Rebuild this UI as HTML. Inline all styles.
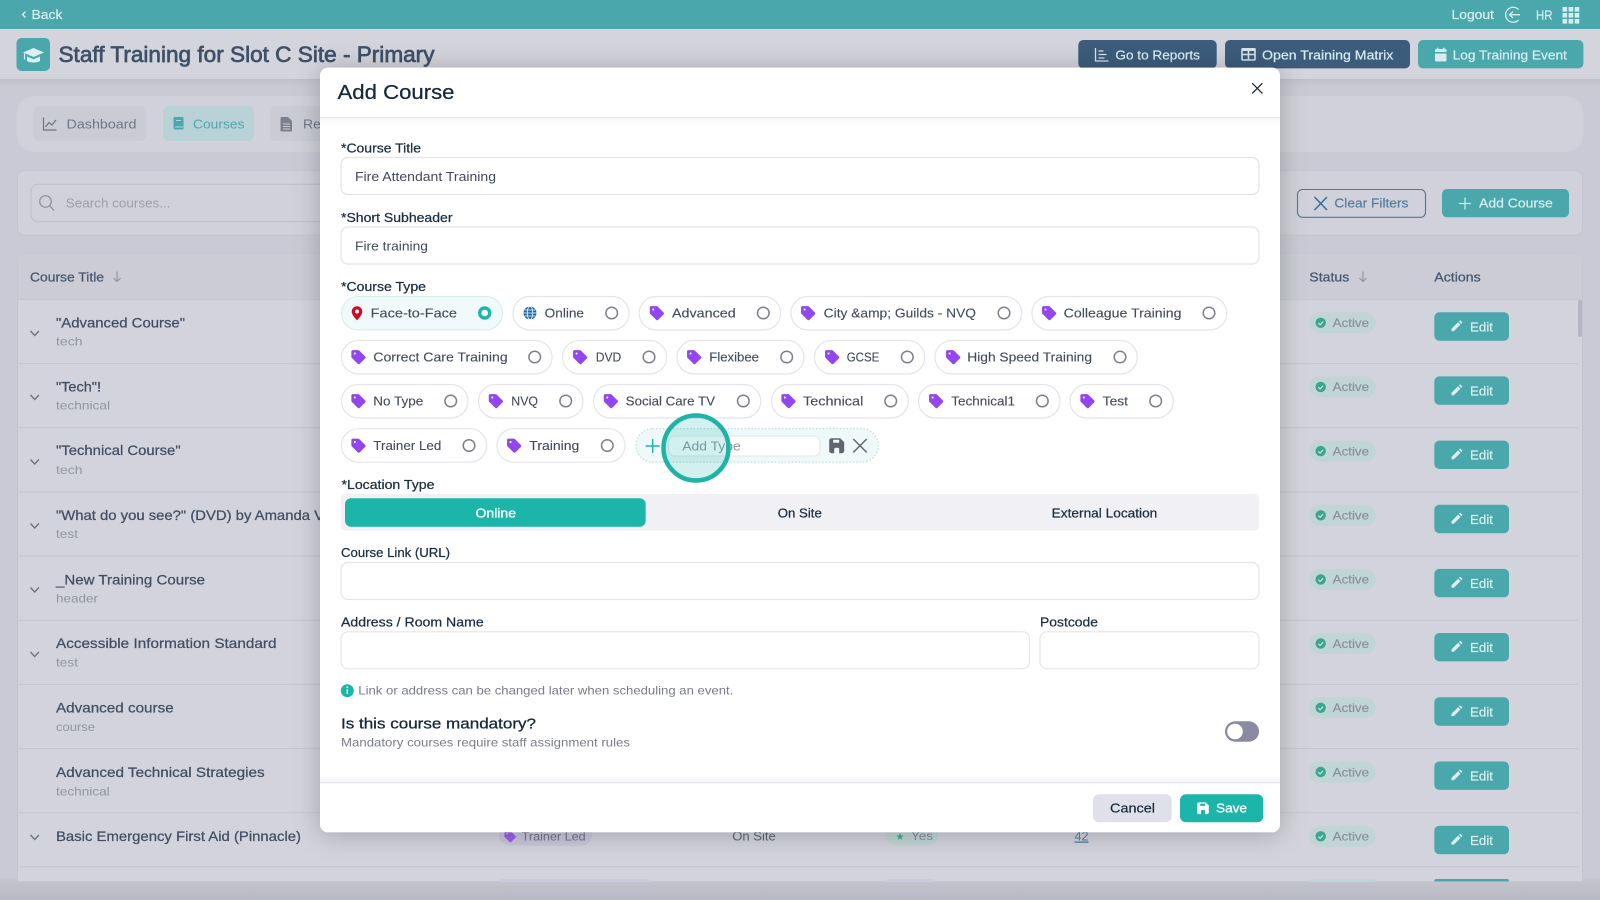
<!DOCTYPE html>
<html lang="en"><head><meta charset="utf-8"><title>Add Course</title>
<style>
html,body{margin:0;padding:0;width:1600px;height:900px;overflow:hidden;background:#c9cad5}
svg.root{display:block;filter:blur(.3px)}
text{font-family:"Liberation Sans",Arial,sans-serif;font-size:13px}
.lab{fill:#1b2f42;stroke:#1b2f42;stroke-width:.25}
.chip{fill:#414c5c;stroke:#414c5c;stroke-width:.12}
.box{fill:#fff;stroke:#e4e4ea;stroke-width:1.2}
.inp{fill:#3f4a5a;font-size:13px}
.ct{fill:#414e64;stroke:#414e64;stroke-width:.25;font-size:14px}
.st{fill:#9195a4;font-size:12px}
.ln{stroke:#c4c5d0;stroke-width:1}
.act{fill:#8a8f98;stroke:#8a8f98;stroke-width:.15;font-size:12px}
.ed{fill:#dbeeee;stroke:#dbeeee;stroke-width:.2;font-size:13px}
.hd{fill:#465870;stroke:#465870;stroke-width:.25;font-size:13px}
.wt{fill:#d8ecee;stroke:#d8ecee;stroke-width:.22;font-size:13px}
.chev{fill:none;stroke:#6b7486;stroke-width:1.4}
.arr{fill:none;stroke:#8e92a2;stroke-width:1.1}
</style></head><body>
<svg class="root" width="1600" height="900" viewBox="0 0 1600 900" xmlns="http://www.w3.org/2000/svg">
<defs>
<linearGradient id="bot" x1="0" y1="0" x2="0" y2="1"><stop offset="0" stop-color="#c4c5cf"/><stop offset="1" stop-color="#b8b9c5"/></linearGradient>
<linearGradient id="hs" x1="0" y1="0" x2="0" y2="1"><stop offset="0" stop-color="#000" stop-opacity=".05"/><stop offset="1" stop-color="#000" stop-opacity="0"/></linearGradient>
<linearGradient id="fs" x1="0" y1="0" x2="0" y2="1"><stop offset="0" stop-color="#000" stop-opacity="0"/><stop offset="1" stop-color="#000" stop-opacity=".035"/></linearGradient>
<filter id="sh" x="-10%" y="-10%" width="120%" height="120%"><feDropShadow dx="0" dy="2" stdDeviation="13" flood-color="#000" flood-opacity=".24"/></filter>
<symbol id="tag" viewBox="0 0 16 16"><path fill="#9146ef" fill-rule="evenodd" d="M.6 2.2A1.600 1.600 0 0 1 2.200.6h5.600a1.600 1.600 0 0 1 1.130.47l6.300 6.300a1.600 1.600 0 0 1 0 2.260l-5.600 5.600a1.600 1.600 0 0 1-2.260 0l-6.300-6.300A1.600 1.600 0 0 1 .6 7.800zM4.300 3.200a1.100 1.100 0 1 0 0 2.200 1.100 1.100 0 0 0 0-2.200z"/></symbol>
<symbol id="floppy" viewBox="0 0 16 16"><path fill-rule="evenodd" d="M3 .5h8.500L15.500 4.500V13a2.500 2.500 0 0 1-2.500 2.500H3A2.500 2.500 0 0 1 .5 13V3A2.500 2.500 0 0 1 3 .5zM4.500 2v3h6V2zM5.500 15.500h5v-4a1.500 1.500 0 0 0-1.500-1.500H7a1.500 1.500 0 0 0-1.500 1.500z"/></symbol>
<symbol id="pencil" viewBox="0 0 12 12"><path d="M1 11V8.600L7.600 2l2.400 2.400L3.400 11zM8.400 1.200l.7-.7a.8.8 0 0 1 1.100 0l1.300 1.300a.8.8 0 0 1 0 1.100l-.7.7z"/></symbol>
</defs>

<!-- page background -->
<rect width="1600" height="900" fill="#c9cad5"/>
<rect y="878" width="1600" height="22" fill="url(#bot)"/>
<rect y="0" width="1600" height="29" fill="#4aa8ad"/>
<rect y="29" width="1600" height="50" fill="#d3d4dc"/>
<rect y="79" width="1600" height="8" fill="url(#hs)"/>

<!-- top bar -->
<path d="M25.500 11.500 22.500 14.500 25.500 17.500" fill="none" stroke="#d8ecee" stroke-width="1.400"/>
<text x="31.500" y="19" class="wt" textLength="31" lengthAdjust="spacingAndGlyphs">Back</text>
<text x="1451.500" y="19" class="wt" textLength="42.500" lengthAdjust="spacingAndGlyphs">Logout</text>
<g fill="none" stroke="#d8ecee" stroke-width="1.300"><path d="M1518.500 9.500A7.500 7.500 0 1 0 1518.500 20"/><path d="M1520 14.700H1509.500M1513 11.500 1509.500 14.700 1513 18"/></g>
<text x="1536" y="19.500" class="wt" textLength="16.500" lengthAdjust="spacingAndGlyphs">HR</text>
<g fill="#d8ecee"><rect x="1562.500" y="7" width="4.600" height="4.600"/><rect x="1568.600" y="7" width="4.600" height="4.600"/><rect x="1574.700" y="7" width="4.600" height="4.600"/><rect x="1562.500" y="13" width="4.600" height="4.600"/><rect x="1568.600" y="13" width="4.600" height="4.600"/><rect x="1574.700" y="13" width="4.600" height="4.600"/><rect x="1562.500" y="19" width="4.600" height="4.600"/><rect x="1568.600" y="19" width="4.600" height="4.600"/><rect x="1574.700" y="19" width="4.600" height="4.600"/></g>

<!-- header -->
<rect x="16.500" y="38" width="33.500" height="33" rx="5" fill="#4aa8ad"/>
<path d="M33.500 48 44 52.500 33.500 57 23 52.500z" fill="#dceeee"/><path d="M27 56.500v4.500c2 2 11 2 13 0v-4.500l-6.500 2.700z" fill="#dceeee"/><path d="M24.500 53.500v6" stroke="#dceeee" stroke-width="1.200"/>
<text x="58.500" y="62" style="font-size:22px;fill:#3f5169;stroke:#3f5169;stroke-width:.7" textLength="376" lengthAdjust="spacingAndGlyphs">Staff Training for Slot C Site - Primary</text>

<rect x="1078.300" y="40" width="138.400" height="28.400" rx="5" fill="#3c5c7c"/>
<g fill="none" stroke="#d8e4ea" stroke-width="1.300"><path d="M1095.500 48v13h13"/><path d="M1098.500 51h5M1098.500 54.500h8M1098.500 58h6"/></g>
<text x="1115.400" y="59.300" class="wt" textLength="84.600" lengthAdjust="spacingAndGlyphs">Go to Reports</text>
<rect x="1225" y="40" width="185" height="28.400" rx="5" fill="#3c5c7c"/>
<g fill="none" stroke="#d8e4ea" stroke-width="1.600"><rect x="1242" y="49" width="13" height="11" rx="1"/><path d="M1242 54.500h13M1248.500 49v11"/></g><rect x="1241.500" y="48" width="14" height="3" fill="#d8e4ea"/>
<text x="1262" y="59.300" class="wt" textLength="131.300" lengthAdjust="spacingAndGlyphs">Open Training Matrix</text>
<rect x="1418" y="40" width="165.400" height="28.400" rx="5" fill="#4aa8ad"/>
<path d="M1435 52h11.500v-2a1 1 0 0 0-1-1h-1v-1.300h-1.500V49h-4.500v-1.300H1437V49h-1a1 1 0 0 0-1 1zM1435 53.500V60.500a1 1 0 0 0 1 1h9.500a1 1 0 0 0 1-1v-7z" fill="#d8ecee"/>
<text x="1452.600" y="59.300" class="wt" textLength="114.400" lengthAdjust="spacingAndGlyphs">Log Training Event</text>

<!-- tab bar -->
<rect x="16.500" y="96" width="1567" height="56" rx="18" fill="#d0d1da"/>
<rect x="33.400" y="106" width="113" height="35" rx="6" fill="#cacbd5"/>
<g fill="none" stroke="#6b7486" stroke-width="1.200"><path d="M43.500 117.500v12.500h13"/><path d="M45.500 127l3.500-4.500 3 2.500 4-5"/></g>
<text x="66.500" y="128.700" textLength="70" lengthAdjust="spacingAndGlyphs" style="fill:#6d7788;font-size:13px">Dashboard</text>
<rect x="163" y="106" width="91" height="35" rx="6" fill="#b8d2d7"/>
<path d="M173.500 118.500a1.500 1.500 0 0 1 1.500-1.500h7.500a1 1 0 0 1 1 1v10.500a1 1 0 0 1-1 1H175a1.500 1.500 0 0 1-1.500-1.500z" fill="#4aa8ad"/><path d="M175 127h8M176 120.500h5" stroke="#b8d2d7" stroke-width="1.100"/>
<text x="193" y="128.700" textLength="51.500" lengthAdjust="spacingAndGlyphs" style="fill:#4fa6ac;font-size:13px">Courses</text>
<rect x="270" y="106" width="60" height="35" rx="6" fill="#cacbd5"/>
<path d="M281.500 117h6.500l4 4v9.500a1 1 0 0 1-1 1h-9.500a1 1 0 0 1-1-1V118a1 1 0 0 1 1-1z" fill="#7b808f"/><path d="M283 124h7M283 126.500h7M283 129h7" stroke="#cacbd5" stroke-width=".9"/>
<text x="303" y="128.700" textLength="18" lengthAdjust="spacingAndGlyphs" style="fill:#6d7788;font-size:13px">Re</text>

<!-- filters -->
<rect x="17.500" y="170.700" width="1565" height="64.600" rx="7" fill="#d0d1da" stroke="#c4c5d0"/>
<rect x="31" y="184.300" width="330" height="37.400" rx="7" fill="#d0d1da" stroke="#bdbec9"/>
<g fill="none" stroke="#8c90a0" stroke-width="1.200"><circle cx="45.500" cy="201.500" r="5.800"/><path d="M50 206 54 210.500"/></g>
<text x="65.800" y="207.700" textLength="104.700" lengthAdjust="spacingAndGlyphs" style="fill:#9c9eab;font-size:13px">Search courses...</text>
<rect x="1297.500" y="189.500" width="128" height="27.800" rx="5" fill="#d0d1da" stroke="#4b7a9c" stroke-width="1.100"/>
<path d="M1314.500 197 1327 210M1327 197 1314.500 210" stroke="#356e99" stroke-width="1.500" fill="none"/>
<text x="1334.400" y="207.700" textLength="74" lengthAdjust="spacingAndGlyphs" style="fill:#4e7c9e;stroke:#4e7c9e;stroke-width:.15;font-size:13px">Clear Filters</text>
<rect x="1442" y="189" width="127" height="28.300" rx="5" fill="#4aa8ad"/>
<path d="M1465 197.500V209.500M1459 203.500H1471" stroke="#cfe7e9" stroke-width="1.300"/>
<text x="1479" y="207.700" class="wt" textLength="73.800" lengthAdjust="spacingAndGlyphs">Add Course</text>

<!-- table -->
<path d="M17.500 881.500V261a7 7 0 0 1 7-7H1575.500a7 7 0 0 1 7 7V881.500z" fill="#d2d3dc" stroke="#c4c5d0"/>
<path d="M18 299.500V261a7 7 0 0 1 7-7H1575a7 7 0 0 1 7 7V299.500z" fill="#cbccd6"/>
<rect x="17.500" y="881" width="1565" height="1" fill="#c4c5d0"/>
<text x="30" y="281.700" class="hd" textLength="74" lengthAdjust="spacingAndGlyphs">Course Title</text>
<path class="arr" d="M117 271.500v10M113.500 278 117 281.500 120.500 278"/>
<text x="1309.300" y="281.700" class="hd" textLength="40" lengthAdjust="spacingAndGlyphs">Status</text>
<path class="arr" d="M1363 271.500v10M1359.500 278 1363 281.500 1366.500 278"/>
<text x="1434.300" y="281.700" class="hd" textLength="46.400" lengthAdjust="spacingAndGlyphs">Actions</text>
<path class="ln" d="M18 299.500H1582M18 363.600H1578M18 427.800H1578M18 492H1578M18 556H1578M18 620.300H1578M18 684.400H1578M18 748.600H1578M18 812.700H1578M18 866.700H1578"/>
<rect x="1578" y="300" width="4" height="37" rx="2" fill="#b4b6c4"/>

<path class="chev" d="M30.500 331 34.700 335.500 38.900 331"/>
<path class="chev" d="M30.500 395 34.700 399.500 38.900 395"/>
<path class="chev" d="M30.500 459.500 34.700 464 38.900 459.500"/>
<path class="chev" d="M30.500 523.500 34.700 528 38.900 523.500"/>
<path class="chev" d="M30.500 587.500 34.700 592 38.900 587.500"/>
<path class="chev" d="M30.500 652 34.700 656.500 38.900 652"/>
<path class="chev" d="M30.500 835 34.700 839.500 38.900 835"/>

<text x="56" y="327.400" class="ct" textLength="129" lengthAdjust="spacingAndGlyphs">"Advanced Course"</text>
<text x="56" y="345.500" class="st" textLength="26.500" lengthAdjust="spacingAndGlyphs">tech</text>
<text x="56" y="391.700" class="ct" textLength="45" lengthAdjust="spacingAndGlyphs">"Tech"!</text>
<text x="56" y="409.500" class="st" textLength="54" lengthAdjust="spacingAndGlyphs">technical</text>
<text x="56" y="455" class="ct" textLength="124.600" lengthAdjust="spacingAndGlyphs">"Technical Course"</text>
<text x="56" y="474" class="st" textLength="26.500" lengthAdjust="spacingAndGlyphs">tech</text>
<text x="56" y="520" class="ct" textLength="268" lengthAdjust="spacingAndGlyphs">"What do you see?" (DVD) by Amanda V</text>
<text x="56" y="538.200" class="st" textLength="22" lengthAdjust="spacingAndGlyphs">test</text>
<text x="56" y="584.600" class="ct" textLength="149" lengthAdjust="spacingAndGlyphs">_New Training Course</text>
<text x="56" y="602.500" class="st" textLength="42" lengthAdjust="spacingAndGlyphs">header</text>
<text x="56" y="648" class="ct" textLength="220.500" lengthAdjust="spacingAndGlyphs">Accessible Information Standard</text>
<text x="56" y="666.500" class="st" textLength="22" lengthAdjust="spacingAndGlyphs">test</text>
<text x="56" y="712.700" class="ct" textLength="117.700" lengthAdjust="spacingAndGlyphs">Advanced course</text>
<text x="56" y="731" class="st" textLength="39" lengthAdjust="spacingAndGlyphs">course</text>
<text x="56" y="777" class="ct" textLength="208.700" lengthAdjust="spacingAndGlyphs">Advanced Technical Strategies</text>
<text x="56" y="795.500" class="st" textLength="53.700" lengthAdjust="spacingAndGlyphs">technical</text>
<text x="56" y="841" class="ct" textLength="245" lengthAdjust="spacingAndGlyphs">Basic Emergency First Aid (Pinnacle)</text>

<!-- last row cells seen beneath modal -->
<rect x="499" y="824" width="92.700" height="21.700" rx="10.800" fill="#c9c6dc"/>
<use href="#tag" x="504" y="830.500" width="12" height="12" opacity=".8"/>
<text x="521.700" y="840.500" textLength="64" lengthAdjust="spacingAndGlyphs" style="fill:#73778a;font-size:12px">Trainer Led</text>
<text x="732.300" y="840.500" textLength="43.400" lengthAdjust="spacingAndGlyphs" style="fill:#5b6578;font-size:13px">On Site</text>
<rect x="885" y="824" width="53" height="21.700" rx="10.800" fill="#c1d5d5"/>
<text x="895.500" y="840" style="fill:#4aa88f;font-size:10px">★</text>
<text x="911" y="840" textLength="22" lengthAdjust="spacingAndGlyphs" style="fill:#8a8f98;font-size:12px">Yes</text>
<text x="1074.500" y="840.500" textLength="14" lengthAdjust="spacingAndGlyphs" style="fill:#4a7fa5;font-size:13px;text-decoration:underline">42</text>
<path d="M500 882v-1a2 2 0 0 1 2-2H648a2 2 0 0 1 2 2v1zM886 882v-1a2 2 0 0 1 2-2H932a2 2 0 0 1 2 2v1z" fill="#cbcadf"/>

<!-- status + edit rows -->
<g transform="translate(0,312.300)"><rect x="1309.300" width="66.400" height="21" rx="10.500" fill="#c1d5d5"/><circle cx="1320.700" cy="10.500" r="5.200" fill="#3ba58f"/><path d="M1318.300 10.700l1.800 1.800 3-3.200" fill="none" stroke="#d2e8e4" stroke-width="1.100"/><text x="1332.700" y="14.800" class="act" textLength="36.300" lengthAdjust="spacingAndGlyphs">Active</text><rect x="1434.300" width="74.700" height="28.400" rx="5" fill="#4aa8ad"/><svg x="1450.500" y="7.800" width="12" height="12" fill="#dbeeee"><use href="#pencil"/></svg><text x="1470" y="19" class="ed" textLength="23" lengthAdjust="spacingAndGlyphs">Edit</text></g>
<g transform="translate(0,376.400)"><rect x="1309.300" width="66.400" height="21" rx="10.500" fill="#c1d5d5"/><circle cx="1320.700" cy="10.500" r="5.200" fill="#3ba58f"/><path d="M1318.300 10.700l1.800 1.800 3-3.200" fill="none" stroke="#d2e8e4" stroke-width="1.100"/><text x="1332.700" y="14.800" class="act" textLength="36.300" lengthAdjust="spacingAndGlyphs">Active</text><rect x="1434.300" width="74.700" height="28.400" rx="5" fill="#4aa8ad"/><svg x="1450.500" y="7.800" width="12" height="12" fill="#dbeeee"><use href="#pencil"/></svg><text x="1470" y="19" class="ed" textLength="23" lengthAdjust="spacingAndGlyphs">Edit</text></g>
<g transform="translate(0,440.600)"><rect x="1309.300" width="66.400" height="21" rx="10.500" fill="#c1d5d5"/><circle cx="1320.700" cy="10.500" r="5.200" fill="#3ba58f"/><path d="M1318.300 10.700l1.800 1.800 3-3.200" fill="none" stroke="#d2e8e4" stroke-width="1.100"/><text x="1332.700" y="14.800" class="act" textLength="36.300" lengthAdjust="spacingAndGlyphs">Active</text><rect x="1434.300" width="74.700" height="28.400" rx="5" fill="#4aa8ad"/><svg x="1450.500" y="7.800" width="12" height="12" fill="#dbeeee"><use href="#pencil"/></svg><text x="1470" y="19" class="ed" textLength="23" lengthAdjust="spacingAndGlyphs">Edit</text></g>
<g transform="translate(0,504.800)"><rect x="1309.300" width="66.400" height="21" rx="10.500" fill="#c1d5d5"/><circle cx="1320.700" cy="10.500" r="5.200" fill="#3ba58f"/><path d="M1318.300 10.700l1.800 1.800 3-3.200" fill="none" stroke="#d2e8e4" stroke-width="1.100"/><text x="1332.700" y="14.800" class="act" textLength="36.300" lengthAdjust="spacingAndGlyphs">Active</text><rect x="1434.300" width="74.700" height="28.400" rx="5" fill="#4aa8ad"/><svg x="1450.500" y="7.800" width="12" height="12" fill="#dbeeee"><use href="#pencil"/></svg><text x="1470" y="19" class="ed" textLength="23" lengthAdjust="spacingAndGlyphs">Edit</text></g>
<g transform="translate(0,568.900)"><rect x="1309.300" width="66.400" height="21" rx="10.500" fill="#c1d5d5"/><circle cx="1320.700" cy="10.500" r="5.200" fill="#3ba58f"/><path d="M1318.300 10.700l1.800 1.800 3-3.200" fill="none" stroke="#d2e8e4" stroke-width="1.100"/><text x="1332.700" y="14.800" class="act" textLength="36.300" lengthAdjust="spacingAndGlyphs">Active</text><rect x="1434.300" width="74.700" height="28.400" rx="5" fill="#4aa8ad"/><svg x="1450.500" y="7.800" width="12" height="12" fill="#dbeeee"><use href="#pencil"/></svg><text x="1470" y="19" class="ed" textLength="23" lengthAdjust="spacingAndGlyphs">Edit</text></g>
<g transform="translate(0,633)"><rect x="1309.300" width="66.400" height="21" rx="10.500" fill="#c1d5d5"/><circle cx="1320.700" cy="10.500" r="5.200" fill="#3ba58f"/><path d="M1318.300 10.700l1.800 1.800 3-3.200" fill="none" stroke="#d2e8e4" stroke-width="1.100"/><text x="1332.700" y="14.800" class="act" textLength="36.300" lengthAdjust="spacingAndGlyphs">Active</text><rect x="1434.300" width="74.700" height="28.400" rx="5" fill="#4aa8ad"/><svg x="1450.500" y="7.800" width="12" height="12" fill="#dbeeee"><use href="#pencil"/></svg><text x="1470" y="19" class="ed" textLength="23" lengthAdjust="spacingAndGlyphs">Edit</text></g>
<g transform="translate(0,697.300)"><rect x="1309.300" width="66.400" height="21" rx="10.500" fill="#c1d5d5"/><circle cx="1320.700" cy="10.500" r="5.200" fill="#3ba58f"/><path d="M1318.300 10.700l1.800 1.800 3-3.200" fill="none" stroke="#d2e8e4" stroke-width="1.100"/><text x="1332.700" y="14.800" class="act" textLength="36.300" lengthAdjust="spacingAndGlyphs">Active</text><rect x="1434.300" width="74.700" height="28.400" rx="5" fill="#4aa8ad"/><svg x="1450.500" y="7.800" width="12" height="12" fill="#dbeeee"><use href="#pencil"/></svg><text x="1470" y="19" class="ed" textLength="23" lengthAdjust="spacingAndGlyphs">Edit</text></g>
<g transform="translate(0,761.500)"><rect x="1309.300" width="66.400" height="21" rx="10.500" fill="#c1d5d5"/><circle cx="1320.700" cy="10.500" r="5.200" fill="#3ba58f"/><path d="M1318.300 10.700l1.800 1.800 3-3.200" fill="none" stroke="#d2e8e4" stroke-width="1.100"/><text x="1332.700" y="14.800" class="act" textLength="36.300" lengthAdjust="spacingAndGlyphs">Active</text><rect x="1434.300" width="74.700" height="28.400" rx="5" fill="#4aa8ad"/><svg x="1450.500" y="7.800" width="12" height="12" fill="#dbeeee"><use href="#pencil"/></svg><text x="1470" y="19" class="ed" textLength="23" lengthAdjust="spacingAndGlyphs">Edit</text></g>
<g transform="translate(0,825.800)"><rect x="1309.300" width="66.400" height="21" rx="10.500" fill="#c1d5d5"/><circle cx="1320.700" cy="10.500" r="5.200" fill="#3ba58f"/><path d="M1318.300 10.700l1.800 1.800 3-3.200" fill="none" stroke="#d2e8e4" stroke-width="1.100"/><text x="1332.700" y="14.800" class="act" textLength="36.300" lengthAdjust="spacingAndGlyphs">Active</text><rect x="1434.300" width="74.700" height="28.400" rx="5" fill="#4aa8ad"/><svg x="1450.500" y="7.800" width="12" height="12" fill="#dbeeee"><use href="#pencil"/></svg><text x="1470" y="19" class="ed" textLength="23" lengthAdjust="spacingAndGlyphs">Edit</text></g>
<path d="M1309.300 882v-1a2 2 0 0 1 2-2H1373.700a2 2 0 0 1 2 2v1z" fill="#c1d5d5"/>
<path d="M1434.300 881.500v-.5a2 2 0 0 1 2-2H1507a2 2 0 0 1 2 2v.5z" fill="#4aa8ad"/>

<!-- modal -->
<rect x="320" y="67.600" width="960" height="764.700" rx="8" fill="#fff" filter="url(#sh)"/>
<rect x="320" y="117" width="960" height="1.200" fill="#e6e6ec"/>
<rect x="320" y="118.200" width="960" height="8" fill="url(#hs)" opacity=".5"/>
<text x="337.500" y="99" style="font-size:20.500px;fill:#14293c;stroke:#14293c;stroke-width:.25" textLength="117" lengthAdjust="spacingAndGlyphs">Add Course</text>
<path d="M1252.200 83.200 1262.400 93.400M1262.400 83.200 1252.200 93.400" stroke="#1a2b3c" stroke-width="1.300"/>

<text x="341" y="152.700" class="lab" textLength="80" lengthAdjust="spacingAndGlyphs">*Course Title</text>
<rect class="box" x="341" y="157.500" width="918" height="37" rx="7"/>
<text x="355" y="181" class="inp" textLength="141" lengthAdjust="spacingAndGlyphs">Fire Attendant Training</text>
<text x="341" y="222" class="lab" textLength="111.500" lengthAdjust="spacingAndGlyphs">*Short Subheader</text>
<rect class="box" x="341" y="227" width="918" height="37" rx="7"/>
<text x="355" y="250.300" class="inp" textLength="73" lengthAdjust="spacingAndGlyphs">Fire training</text>
<text x="341" y="291" class="lab" textLength="85" lengthAdjust="spacingAndGlyphs">*Course Type</text>

<!-- chips row 1 -->
<rect x="341.500" y="296.500" width="161" height="33.500" rx="16.700" fill="#f0fafa" stroke="#d5ebea"/>
<path d="M357 306.200a5.300 5.300 0 0 0-5.300 5.300c0 3.800 5.300 8.800 5.300 8.800s5.300-5 5.300-8.800a5.300 5.300 0 0 0-5.300-5.300zm0 7.300a2 2 0 1 1 0-4 2 2 0 0 1 0 4z" fill="#cf0a24"/>
<text x="370.700" y="317.700" class="chip" textLength="86.300" lengthAdjust="spacingAndGlyphs">Face-to-Face</text>
<circle cx="484.700" cy="313" r="5" fill="#fff" stroke="#1cb5aa" stroke-width="3.400"/>

<rect class="box" x="513" y="296.500" width="116" height="33.500" rx="16.700"/>
<circle cx="530" cy="313" r="6.500" fill="#1a66a8"/><g fill="none" stroke="#fff" stroke-width=".8"><ellipse cx="530" cy="313" rx="2.800" ry="6.500"/><path d="M523.500 313h13M524.500 310h11M524.500 316h11"/></g>
<text x="544.700" y="317.700" class="chip" textLength="39.300" lengthAdjust="spacingAndGlyphs">Online</text>
<circle cx="611.700" cy="313" r="5.800" fill="#fff" stroke="#7e7f8e" stroke-width="1.500"/>

<rect class="box" x="639.200" y="296.500" width="141.500" height="33.500" rx="16.700"/>
<use href="#tag" x="649.200" y="305.500" width="15" height="15"/>
<text x="672" y="317.700" class="chip" textLength="63.700" lengthAdjust="spacingAndGlyphs">Advanced</text>
<circle cx="763.300" cy="313" r="5.800" fill="#fff" stroke="#7e7f8e" stroke-width="1.500"/>

<rect class="box" x="791" y="296.500" width="230.700" height="33.500" rx="16.700"/>
<use href="#tag" x="800.500" y="305.500" width="15" height="15"/>
<text x="823.700" y="317.700" class="chip" textLength="152.300" lengthAdjust="spacingAndGlyphs">City &amp;amp; Guilds - NVQ</text>
<circle cx="1004" cy="313" r="5.800" fill="#fff" stroke="#7e7f8e" stroke-width="1.500"/>

<rect class="box" x="1032" y="296.500" width="194.700" height="33.500" rx="16.700"/>
<use href="#tag" x="1041.500" y="305.500" width="15" height="15"/>
<text x="1063.700" y="317.700" class="chip" textLength="117.800" lengthAdjust="spacingAndGlyphs">Colleague Training</text>
<circle cx="1209" cy="313" r="5.800" fill="#fff" stroke="#7e7f8e" stroke-width="1.500"/>

<!-- chips row 2 -->
<rect class="box" x="341.500" y="340.500" width="210.500" height="33.500" rx="16.700"/>
<use href="#tag" x="350.800" y="349.500" width="15" height="15"/>
<text x="373.300" y="361.700" class="chip" textLength="134.400" lengthAdjust="spacingAndGlyphs">Correct Care Training</text>
<circle cx="534.700" cy="357" r="5.800" fill="#fff" stroke="#7e7f8e" stroke-width="1.500"/>

<rect class="box" x="562.500" y="340.500" width="104.200" height="33.500" rx="16.700"/>
<use href="#tag" x="572.500" y="349.500" width="15" height="15"/>
<text x="595.700" y="361.700" class="chip" textLength="25.600" lengthAdjust="spacingAndGlyphs">DVD</text>
<circle cx="649" cy="357" r="5.800" fill="#fff" stroke="#7e7f8e" stroke-width="1.500"/>

<rect class="box" x="677" y="340.500" width="127" height="33.500" rx="16.700"/>
<use href="#tag" x="686.500" y="349.500" width="15" height="15"/>
<text x="709.300" y="361.700" class="chip" textLength="49.700" lengthAdjust="spacingAndGlyphs">Flexibee</text>
<circle cx="786.700" cy="357" r="5.800" fill="#fff" stroke="#7e7f8e" stroke-width="1.500"/>

<rect class="box" x="814.500" y="340.500" width="110.200" height="33.500" rx="16.700"/>
<use href="#tag" x="824.500" y="349.500" width="15" height="15"/>
<text x="846.700" y="361.700" class="chip" textLength="32.600" lengthAdjust="spacingAndGlyphs">GCSE</text>
<circle cx="907.300" cy="357" r="5.800" fill="#fff" stroke="#7e7f8e" stroke-width="1.500"/>

<rect class="box" x="935" y="340.500" width="202.300" height="33.500" rx="16.700"/>
<use href="#tag" x="945.500" y="349.500" width="15" height="15"/>
<text x="967.300" y="361.700" class="chip" textLength="124.700" lengthAdjust="spacingAndGlyphs">High Speed Training</text>
<circle cx="1120" cy="357" r="5.800" fill="#fff" stroke="#7e7f8e" stroke-width="1.500"/>

<!-- chips row 3 -->
<rect class="box" x="341.500" y="384.500" width="126.500" height="33.500" rx="16.700"/>
<use href="#tag" x="350.800" y="393.500" width="15" height="15"/>
<text x="373.300" y="405.700" class="chip" textLength="50" lengthAdjust="spacingAndGlyphs">No Type</text>
<circle cx="450.700" cy="401" r="5.800" fill="#fff" stroke="#7e7f8e" stroke-width="1.500"/>

<rect class="box" x="478.500" y="384.500" width="104.500" height="33.500" rx="16.700"/>
<use href="#tag" x="488.200" y="393.500" width="15" height="15"/>
<text x="511.300" y="405.700" class="chip" textLength="26.700" lengthAdjust="spacingAndGlyphs">NVQ</text>
<circle cx="565.700" cy="401" r="5.800" fill="#fff" stroke="#7e7f8e" stroke-width="1.500"/>

<rect class="box" x="593.500" y="384.500" width="167.200" height="33.500" rx="16.700"/>
<use href="#tag" x="603.200" y="393.500" width="15" height="15"/>
<text x="625.700" y="405.700" class="chip" textLength="89.300" lengthAdjust="spacingAndGlyphs">Social Care TV</text>
<circle cx="743.300" cy="401" r="5.800" fill="#fff" stroke="#7e7f8e" stroke-width="1.500"/>

<rect class="box" x="771.500" y="384.500" width="136.800" height="33.500" rx="16.700"/>
<use href="#tag" x="780.800" y="393.500" width="15" height="15"/>
<text x="803" y="405.700" class="chip" textLength="60.300" lengthAdjust="spacingAndGlyphs">Technical</text>
<circle cx="890.700" cy="401" r="5.800" fill="#fff" stroke="#7e7f8e" stroke-width="1.500"/>

<rect class="box" x="918.500" y="384.500" width="141.500" height="33.500" rx="16.700"/>
<use href="#tag" x="928.500" y="393.500" width="15" height="15"/>
<text x="951.300" y="405.700" class="chip" textLength="63.700" lengthAdjust="spacingAndGlyphs">Technical1</text>
<circle cx="1042.300" cy="401" r="5.800" fill="#fff" stroke="#7e7f8e" stroke-width="1.500"/>

<rect class="box" x="1070" y="384.500" width="103.300" height="33.500" rx="16.700"/>
<use href="#tag" x="1079.800" y="393.500" width="15" height="15"/>
<text x="1102.700" y="405.700" class="chip" textLength="25.300" lengthAdjust="spacingAndGlyphs">Test</text>
<circle cx="1155.700" cy="401" r="5.800" fill="#fff" stroke="#7e7f8e" stroke-width="1.500"/>

<!-- chips row 4 -->
<rect class="box" x="341.500" y="428.700" width="145.200" height="33.500" rx="16.700"/>
<use href="#tag" x="350.800" y="438" width="15" height="15"/>
<text x="373.300" y="450" class="chip" textLength="68" lengthAdjust="spacingAndGlyphs">Trainer Led</text>
<circle cx="469" cy="445.500" r="5.800" fill="#fff" stroke="#7e7f8e" stroke-width="1.500"/>

<rect class="box" x="497" y="428.700" width="128" height="33.500" rx="16.700"/>
<use href="#tag" x="506.500" y="438" width="15" height="15"/>
<text x="529.300" y="450" class="chip" textLength="50" lengthAdjust="spacingAndGlyphs">Training</text>
<circle cx="607.300" cy="445.500" r="5.800" fill="#fff" stroke="#7e7f8e" stroke-width="1.500"/>

<rect x="636" y="428.700" width="242.300" height="33.500" rx="16.700" fill="#eff9f9" stroke="#c5d8d8" stroke-width="1.100" stroke-dasharray="1.600 1.800"/>
<path d="M652.700 439V453M645.700 446H659.700" stroke="#1cb5aa" stroke-width="1.400"/>
<rect x="668.500" y="436" width="151.500" height="20" rx="6" fill="#fff" stroke="#dfe5e8"/>
<text x="682.300" y="450.500" textLength="58.400" lengthAdjust="spacingAndGlyphs" style="fill:#8e93a0;font-size:13px">Add Type</text>
<use href="#floppy" x="828.700" y="437.700" width="16" height="16" fill="#62656f"/>
<path d="M853.300 439 866.700 452.400M866.700 439 853.300 452.400" stroke="#62656f" stroke-width="1.500"/>

<!-- location -->
<text x="341.500" y="489" class="lab" textLength="93" lengthAdjust="spacingAndGlyphs">*Location Type</text>
<rect x="341" y="494" width="918" height="36.700" rx="5" fill="#f1f1f5"/>
<rect x="345" y="498.300" width="300.700" height="28.400" rx="6" fill="#1cb5aa"/>
<text x="475.500" y="517.300" textLength="40.500" lengthAdjust="spacingAndGlyphs" style="fill:#fff;stroke:#fff;stroke-width:.35;font-size:13px">Online</text>
<text x="777.800" y="517.300" class="lab" textLength="44" lengthAdjust="spacingAndGlyphs">On Site</text>
<text x="1051.700" y="517.300" class="lab" textLength="105.600" lengthAdjust="spacingAndGlyphs">External Location</text>

<text x="341" y="557" class="lab" textLength="109" lengthAdjust="spacingAndGlyphs">Course Link (URL)</text>
<rect class="box" x="341" y="562.500" width="918" height="37" rx="7"/>
<text x="341" y="626.500" class="lab" textLength="142.700" lengthAdjust="spacingAndGlyphs">Address / Room Name</text>
<rect class="box" x="341" y="631.800" width="688.500" height="37" rx="7"/>
<text x="1040" y="626.500" class="lab" textLength="58" lengthAdjust="spacingAndGlyphs">Postcode</text>
<rect class="box" x="1040" y="631.800" width="219" height="37" rx="7"/>

<circle cx="347.300" cy="690.700" r="6.500" fill="#1cb5aa"/><path d="M347.300 689.500v4.300" stroke="#fff" stroke-width="1.500"/><circle cx="347.300" cy="687.300" r="1" fill="#fff"/>
<text x="358.300" y="694.300" textLength="375" lengthAdjust="spacingAndGlyphs" style="fill:#787b87;font-size:12px">Link or address can be changed later when scheduling an event.</text>
<text x="341" y="728.300" textLength="195" lengthAdjust="spacingAndGlyphs" style="fill:#14293c;stroke:#14293c;stroke-width:.3;font-size:15px">Is this course mandatory?</text>
<text x="341" y="746.700" textLength="289" lengthAdjust="spacingAndGlyphs" style="fill:#7a7d88;font-size:12px">Mandatory courses require staff assignment rules</text>
<rect x="1225" y="721.300" width="34" height="20.400" rx="10.200" fill="#8a8aa0"/>
<circle cx="1235" cy="731.500" r="7.800" fill="#fff"/>

<rect x="320" y="774" width="960" height="8" fill="url(#fs)"/>
<rect x="320" y="782" width="960" height="1.200" fill="#e6e6ec"/>
<rect x="1093" y="794.300" width="78.700" height="28" rx="6" fill="#e0e0ea"/>
<text x="1110" y="812.700" textLength="45" lengthAdjust="spacingAndGlyphs" style="fill:#14293c;stroke:#14293c;stroke-width:.2;font-size:13px">Cancel</text>
<rect x="1180" y="794.300" width="83.300" height="28" rx="6" fill="#1cb5aa"/>
<use href="#floppy" x="1196.700" y="802" width="12.500" height="12.500" fill="#fff"/>
<text x="1216" y="812.700" textLength="31" lengthAdjust="spacingAndGlyphs" style="fill:#fff;stroke:#fff;stroke-width:.3;font-size:13px">Save</text>

<!-- click highlight -->
<circle cx="696" cy="448" r="32.500" fill="#1cb5aa" fill-opacity=".2" stroke="#1fb2a6" stroke-width="4.500"/>
</svg>
</body></html>
